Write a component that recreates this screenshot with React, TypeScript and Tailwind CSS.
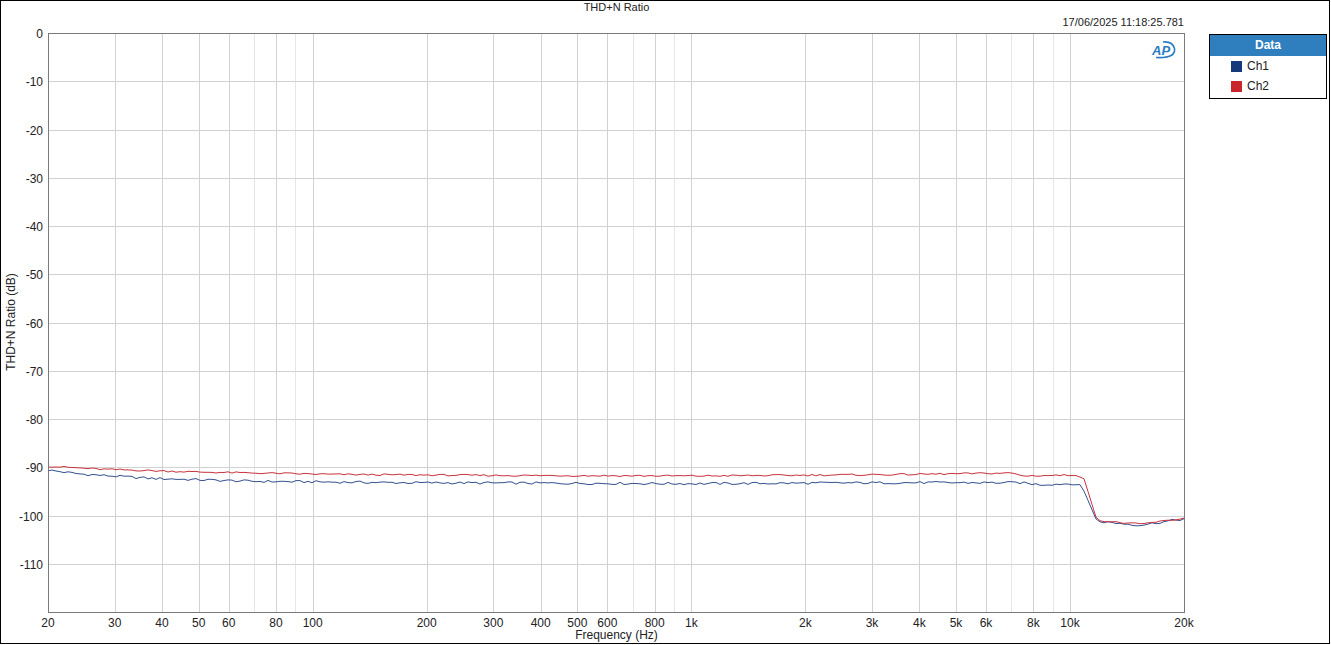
import React from 'react'

// Plot geometry (page pixels)
const X0 = 48
const X1 = 1184
const Y0 = 33
const Y1 = 612

const xOf = (f: number) => X0 + (Math.log10(f / 20) * (X1 - X0)) / 3
const yOf = (db: number) => Y0 + (-db * (Y1 - Y0)) / 120

const labeledFreqs: [number, string][] = [
  [20, '20'], [30, '30'], [40, '40'], [50, '50'], [60, '60'], [80, '80'], [100, '100'],
  [200, '200'], [300, '300'], [400, '400'], [500, '500'], [600, '600'], [800, '800'], [1000, '1k'],
  [2000, '2k'], [3000, '3k'], [4000, '4k'], [5000, '5k'], [6000, '6k'], [8000, '8k'], [10000, '10k'],
  [20000, '20k'],
]
const minorFreqs = [70, 90, 700, 900, 7000, 9000]

// Shape of each trace, as [x pixel, dB]
const ch2Knots: [number, number][] = [
  [48, -89.8], [100, -90.4], [200, -91.0], [340, -91.5], [500, -91.7], [700, -91.8],
  [900, -91.5], [1012, -91.2], [1022, -91.8], [1078, -91.6], [1084, -92.4], [1097, -101.0],
  [1110, -101.3], [1140, -101.8], [1184, -100.6],
]
const ch1Knots: [number, number][] = [
  [48, -90.6], [80, -91.4], [150, -92.3], [250, -92.9], [400, -93.2], [700, -93.4],
  [900, -93.2], [1020, -93.2], [1040, -93.6], [1074, -93.4], [1082, -94.0], [1097, -101.2],
  [1140, -102.0], [1184, -100.7],
]

const interp = (knots: [number, number][], x: number) => {
  for (let i = 0; i < knots.length - 1; i++) {
    const [xa, ya] = knots[i]
    const [xb, yb] = knots[i + 1]
    if (x >= xa && x <= xb) return ya + ((yb - ya) * (x - xa)) / (xb - xa)
  }
  return knots[knots.length - 1][1]
}

const noise = (i: number, seed: number) => {
  const v = Math.sin(i * 12.9898 + seed * 78.233) * 43758.5453
  return v - Math.floor(v) - 0.5
}

const tracePoints = (knots: [number, number][], seed: number, amp: number) => {
  const pts: string[] = []
  let i = 0
  for (let x = X0; x <= X1; x += 4) {
    const steep = x > 1080 && x < 1098
    const db = interp(knots, x) + (steep ? 0 : noise(i, seed) * amp)
    pts.push(`${x},${yOf(db).toFixed(1)}`)
    i++
  }
  pts.push(`${X1},${yOf(interp(knots, X1)).toFixed(1)}`)
  return pts.join(' ')
}

const ApLogo = () => (
  <g>
    <text
      x={1152}
      y={55}
      fontFamily="'Liberation Sans', Arial, sans-serif"
      fontStyle="italic"
      fontWeight="bold"
      fontSize={13}
      fill="#2b7cc2"
    >
      AP
    </text>
    <path d="M1156 57.5 Q1176 58.5 1174.5 48.5 Q1172.5 41 1163 42" stroke="#2b7cc2" strokeWidth={1.6} fill="none" />
  </g>
)

const Chart = () => {
  const hLines = Array.from({ length: 13 }, (_, i) => -i * 10)
  return (
    <svg width={1188} height={596} viewBox="21 30 1188 596" className="block overflow-visible">
      {/* vertical grid */}
      {minorFreqs.map(f => {
        const x = Math.round(xOf(f)) + 0.5
        return <line key={f} x1={x} x2={x} y1={Y0} y2={Y1} stroke="#e6e6e6" shapeRendering="crispEdges" />
      })}
      {labeledFreqs.map(([f]) => {
        const x = Math.round(xOf(f)) + 0.5
        return <line key={f} x1={x} x2={x} y1={Y0} y2={Y1} stroke="#d2d2d2" shapeRendering="crispEdges" />
      })}
      {/* horizontal grid */}
      {hLines.map(db => {
        const y = Math.round(yOf(db)) + 0.5
        return <line key={db} x1={X0} x2={X1} y1={y} y2={y} stroke="#d2d2d2" shapeRendering="crispEdges" />
      })}

      {/* traces */}
      <polyline points={tracePoints(ch1Knots, 1, 0.5)} fill="none" stroke="#34508f" strokeWidth={1} strokeLinejoin="round" />
      <polyline points={tracePoints(ch2Knots, 2, 0.35)} fill="none" stroke="#c9343d" strokeWidth={1} strokeLinejoin="round" />

      {/* frame */}
      <rect x={X0 + 0.5} y={Y0 + 0.5} width={X1 - X0} height={Y1 - Y0} fill="none" stroke="#7a7a7a" shapeRendering="crispEdges" />

      <ApLogo />

      {/* y ticks */}
      {hLines.slice(0, 12).map(db => (
        <text
          key={db}
          x={43}
          y={Math.round(yOf(db)) + 4.5}
          textAnchor="end"
          fontSize={12}
          fontFamily="'Liberation Sans', Arial, sans-serif"
          fill="#222"
        >
          {db}
        </text>
      ))}

      {/* x ticks */}
      {labeledFreqs.map(([f, label]) => (
        <text
          key={label}
          x={xOf(f)}
          y={627}
          textAnchor="middle"
          fontSize={12}
          fontFamily="'Liberation Sans', Arial, sans-serif"
          fill="#222"
        >
          {label}
        </text>
      ))}
    </svg>
  )
}

const Legend = () => (
  <div className="mt-[33px] w-[118px] h-[65px] border border-black bg-white flex flex-col">
    <div className="h-[21px] bg-[#2f7fbf] text-white font-bold text-[12px] leading-[21px] text-center">Data</div>
    <div className="h-[20px] flex items-center pl-[21px]">
      <span className="w-[11px] h-[11px] bg-[#143a7c]" />
      <span className="ml-[5px] text-[12px] text-[#222]">Ch1</span>
    </div>
    <div className="h-[20px] flex items-center pl-[21px]">
      <span className="w-[11px] h-[11px] bg-[#c8262b]" />
      <span className="ml-[5px] text-[12px] text-[#222]">Ch2</span>
    </div>
  </div>
)

export default function App() {
  return (
    <div
      className="w-[1330px] h-[644px] border border-black bg-white flex text-[#222]"
      style={{ fontFamily: "'Liberation Sans', Arial, sans-serif" }}
    >
      {/* Chart column */}
      <div className="w-[1208px] flex flex-col">
        <div className="h-[13px] w-[1184px] pl-[47px] text-center text-[11px] leading-[13px]">THD+N Ratio</div>
        <div className="h-[16px] w-[1183px] text-right text-[11px] leading-[16px]">17/06/2025 11:18:25.781</div>
        <div className="h-[596px] flex">
          <div className="w-[20px] flex items-center justify-center pb-[12px]">
            <span className="-rotate-90 whitespace-nowrap text-[12px] leading-[12px]">THD+N Ratio (dB)</span>
          </div>
          <Chart />
        </div>
        <div className="h-[17px] w-[1184px] pl-[47px] pt-[1px] text-center text-[12px] leading-[16px]">Frequency (Hz)</div>
      </div>

      <Legend />
    </div>
  )
}
